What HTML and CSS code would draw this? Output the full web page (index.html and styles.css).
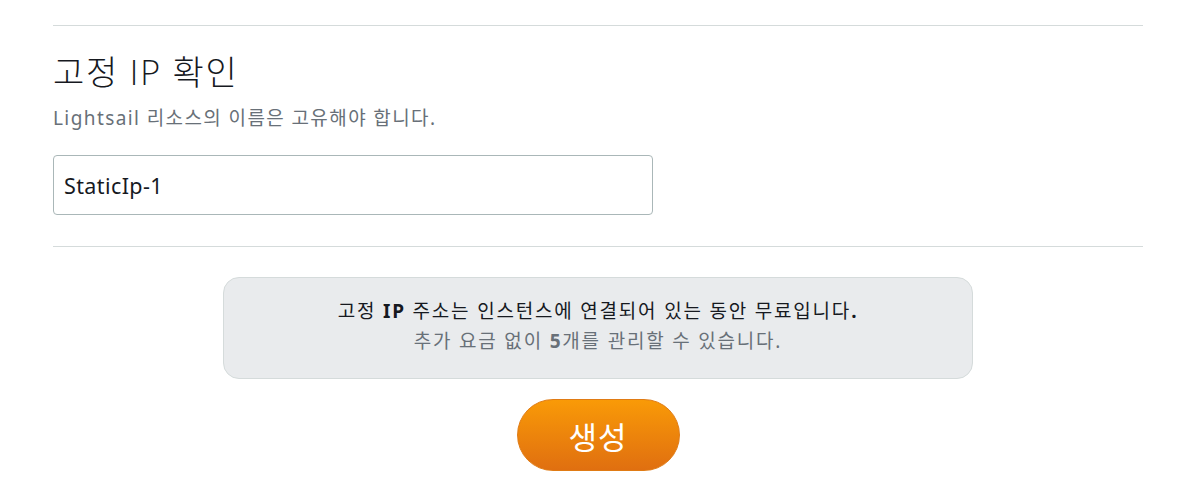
FILE: index.html
```html
<!DOCTYPE html>
<html lang="ko">
<head>
<meta charset="utf-8">
<link rel="stylesheet" href="styles.css">
</head>
<body>
<div class="page">
  <hr class="rule rule-top">
  <section class="section">
    <h2 class="title">고정 IP 확인</h2>
    <p class="hint">Lightsail 리소스의 이름은 고유해야 합니다.</p>
    <div class="field">StaticIp-1</div>
  </section>
  <hr class="rule rule-bottom">
  <div class="info">
    <p class="info-main">고정 <b>IP</b> 주소는 인스턴스에 연결되어 있는 동안 무료입니다<b>.</b></p>
    <p class="info-sub">추가 요금 없이 <b>5</b>개를 관리할 수 있습니다.</p>
  </div>
  <div class="actions">
    <button class="create">생성</button>
  </div>
</div>
</body>
</html>
```
FILE: styles.css
```css
* { box-sizing: border-box; }
html, body { margin: 0; padding: 0; background: #fff; }
body {
  font-family: "Noto Sans", "Noto Sans CJK KR", sans-serif;
  color: #16191f;
}
.page {
  width: 1090px;
  margin-left: 53px;
  display: flex;
  flex-direction: column;
}
.rule {
  border: 0;
  height: 1px;
  background: #d5dbdb;
  margin: 0;
}
.rule-top { margin-top: 25px; }
.section { padding-top: 26px; }
.title {
  margin: 0;
  font-weight: 300;
  font-size: 34px;
  line-height: 40px;
  letter-spacing: 1.8px;
  color: #16191f;
  font-family: "Open Sans", "Noto Sans CJK KR", sans-serif;
}
.hint {
  margin: 14px 0 0;
  font-size: 19px;
  line-height: 24px;
  letter-spacing: 1.4px;
  color: #687078;
}
.field {
  margin-top: 25px;
  width: 600px;
  height: 60px;
  border: 1px solid #aab7b8;
  border-radius: 4px;
  padding: 0 10px;
  display: flex;
  align-items: center;
  font-size: 21.5px;
  letter-spacing: 0.4px;
  color: #16191f;
}
.rule-bottom { margin-top: 31px; }
.info {
  margin: 30px 0 0 170px;
  width: 750px;
  height: 102px;
  background: #e9ebed;
  border: 1px solid #d5dbdb;
  border-radius: 16px;
  padding-top: 18px;
  text-align: center;
  font-size: 19px;
  line-height: 30px;
  letter-spacing: 1.8px;
}
.info p { margin: 0; }
.info b { font-weight: 700; }
.info-main { color: #16191f; }
.info-sub { color: #687078; }
.actions {
  display: flex;
  justify-content: center;
  padding-top: 20px;
}
.create {
  width: 163px;
  height: 72px;
  border: 1px solid #e07b14;
  border-radius: 36px;
  background: linear-gradient(#f99a07, #e06f10);
  color: #fff;
  font-family: "Noto Sans CJK KR", sans-serif;
  font-size: 31px;
  font-weight: 400;
  letter-spacing: 1px;
  padding: 0;
}
```
